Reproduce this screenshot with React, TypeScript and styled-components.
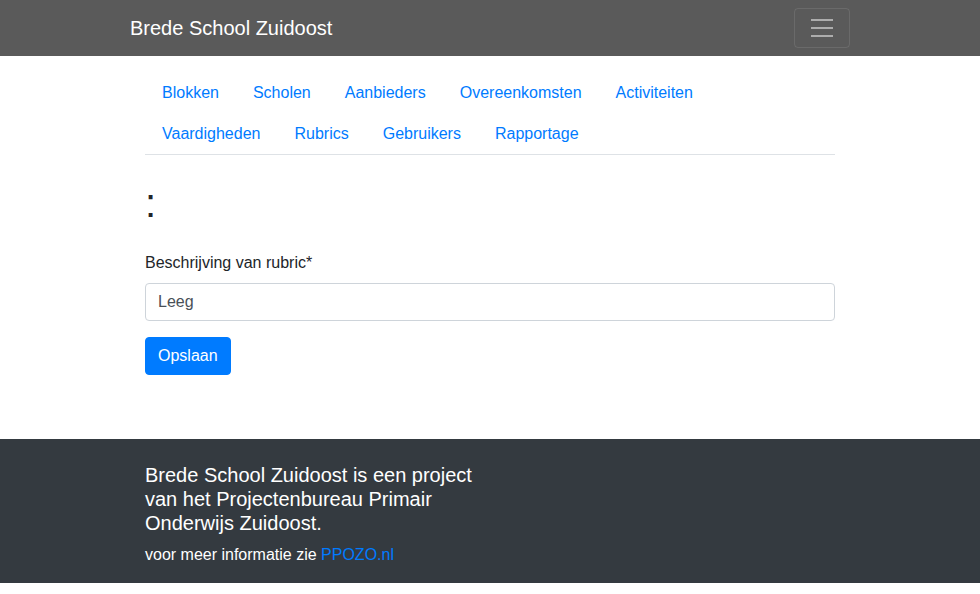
import React from "react";
import styled, { createGlobalStyle } from "styled-components";

const GlobalStyle = createGlobalStyle`
  *, *::before, *::after { box-sizing: border-box; }
  body {
    margin: 0;
    font-family: "Liberation Sans", Arial, sans-serif;
    font-size: 16px;
    line-height: 1.5;
    color: #212529;
    background: #fff;
  }
`;

const Navbar = styled.nav`
  background: #5a5a5a;
  height: 56px;
`;

const NavInner = styled.div`
  width: 720px;
  margin: 0 auto;
  height: 100%;
  display: flex;
  align-items: center;
  justify-content: space-between;
`;

const Brand = styled.a`
  color: #fff;
  font-size: 20px;
  line-height: 30px;
  text-decoration: none;
`;

const Toggler = styled.button`
  width: 56px;
  height: 40px;
  padding: 4px 12px;
  background: transparent;
  border: 1px solid rgba(255, 255, 255, 0.1);
  border-radius: 4px;
  display: flex;
  align-items: center;
  justify-content: center;
`;

const Container = styled.div`
  width: 720px;
  margin: 0 auto;
  padding: 0 15px;
`;

const Main = styled(Container)`
  padding-bottom: 64px;
`;

const Tabs = styled.ul`
  list-style: none;
  margin: 16px 0 0;
  padding: 0;
  display: flex;
  flex-wrap: wrap;
  border-bottom: 1px solid #dee2e6;
`;

const TabLink = styled.a`
  display: block;
  padding: 8px 16px;
  border: 1px solid transparent;
  margin-bottom: -1px;
  color: #007bff;
  text-decoration: none;
`;

const Title = styled.h1`
  font-size: 40px;
  font-weight: 500;
  line-height: 1.2;
  margin: 24px 0 8px;
`;

const Form = styled.form`
  margin-top: 24px;
`;

const Group = styled.div`
  margin-bottom: 16px;
`;

const Label = styled.label`
  display: block;
  margin-bottom: 8px;
`;

const Input = styled.input`
  display: block;
  width: 100%;
  height: 38px;
  padding: 6px 12px;
  font: inherit;
  color: #495057;
  border: 1px solid #ced4da;
  border-radius: 4px;
`;

const Button = styled.button`
  font: inherit;
  color: #fff;
  background: #007bff;
  border: 1px solid #007bff;
  border-radius: 4px;
  padding: 6px 12px;
  line-height: 24px;
`;

const Footer = styled.footer`
  background: #343a40;
  color: #fff;
  padding: 24px 0 16px;
`;

const FooterCol = styled.div`
  width: 330px;
`;

const FooterTitle = styled.h5`
  font-size: 20px;
  font-weight: 400;
  line-height: 1.2;
  margin: 0 0 8px;
`;

const FooterText = styled.p`
  margin: 0;
`;

const Link = styled.a`
  color: #007bff;
  text-decoration: none;
`;

const tabs = [
  "Blokken",
  "Scholen",
  "Aanbieders",
  "Overeenkomsten",
  "Activiteiten",
  "Vaardigheden",
  "Rubrics",
  "Gebruikers",
  "Rapportage",
];

export default function App() {
  return (
    <>
      <GlobalStyle />
      <Navbar>
        <NavInner>
          <Brand href="#">Brede School Zuidoost</Brand>
          <Toggler aria-label="menu">
            <svg width="30" height="30" viewBox="0 0 30 30">
              <path
                d="M4 7h22M4 15h22M4 23h22"
                stroke="rgba(255,255,255,0.5)"
                strokeWidth="2"
                strokeMiterlimit="10"
              />
            </svg>
          </Toggler>
        </NavInner>
      </Navbar>
      <Main>
        <Tabs>
          {tabs.map((t) => (
            <li key={t}>
              <TabLink href="#">{t}</TabLink>
            </li>
          ))}
        </Tabs>
        <Title>:</Title>
        <Form onSubmit={(e) => e.preventDefault()}>
          <Group>
            <Label>Beschrijving van rubric*</Label>
            <Input defaultValue="Leeg" />
          </Group>
          <Button type="submit">Opslaan</Button>
        </Form>
      </Main>
      <Footer>
        <Container>
          <FooterCol>
            <FooterTitle>
              Brede School Zuidoost is een project van het Projectenbureau
              Primair Onderwijs Zuidoost.
            </FooterTitle>
            <FooterText>
              voor meer informatie zie <Link href="#">PPOZO.nl</Link>
            </FooterText>
          </FooterCol>
        </Container>
      </Footer>
    </>
  );
}
